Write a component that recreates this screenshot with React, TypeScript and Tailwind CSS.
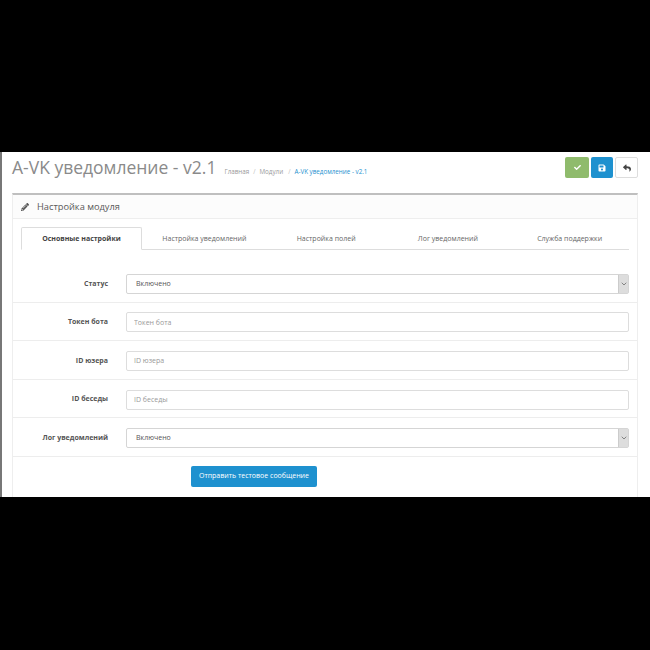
import { ChevronDown } from "lucide-react";
import { FaCheck, FaSave, FaReply, FaPencilAlt } from "react-icons/fa";

const tabs = ["Настройка уведомлений", "Настройка полей", "Лог уведомлений", "Служба поддержки"];

function Row({ label, children }: { label: string; children: React.ReactNode }) {
  return (
    <div className="flex h-[38.6px] items-center border-b border-[#ededed] pt-[2px]">
      <div className="w-[95px] shrink-0 text-right text-[7px] font-bold text-[#555]">{label}</div>
      <div className="ml-[18px] mr-[8px] flex-1">{children}</div>
    </div>
  );
}

function Sel() {
  return (
    <div className="flex h-[20px] items-center justify-between rounded-[2px] border border-[#d5d5d5] bg-white text-[7px] text-[#555]">
      <span className="pl-[9px]">Включено</span>
      <span className="flex h-full w-[10px] items-center justify-center border-l border-[#ccc] bg-[#ddd]">
        <ChevronDown size={8} strokeWidth={2} className="text-[#555]" />
      </span>
    </div>
  );
}

function Inp({ ph }: { ph: string }) {
  return (
    <input
      placeholder={ph}
      className="block h-[20px] w-full rounded-[2px] border border-[#ddd] bg-white px-[7px] text-[7px] text-[#555] outline-none placeholder:text-[#999]"
    />
  );
}

export default function App() {
  return (
    <div className="h-[650px] w-[650px] overflow-hidden bg-black pt-[152px] font-['Open_Sans',sans-serif]">
      <div className="h-[345px] overflow-hidden border-l-2 border-[#777] bg-white">
        <div className="ml-[10px] mr-[12px] flex h-[41px] items-start justify-between">
          <div className="flex items-baseline pt-[2px]">
            <h1 className="text-[17.5px] leading-[26px] text-[#8a8a8a]">A-VK уведомление - v2.1</h1>
            <div className="ml-[8px] flex gap-[4px] text-[6.25px] text-[#999]">
              <span>Главная</span>
              <span className="text-[#bbb]">/</span>
              <span>Модули</span>
              <span className="ml-[1px] text-[#bbb]">/</span>
              <span className="text-[#1e91cf]">A-VK уведомление - v2.1</span>
            </div>
          </div>
          <div className="mt-[5px] flex gap-[2px]">
            <button className="flex h-[21px] w-[24px] items-center justify-center rounded-[2px] bg-[#8fbb6c] text-white">
              <FaCheck size={7} />
            </button>
            <button className="flex h-[21px] w-[22px] items-center justify-center rounded-[2px] bg-[#1e91cf] text-white">
              <FaSave size={8} />
            </button>
            <button className="flex h-[21px] w-[23px] items-center justify-center rounded-[2px] border border-[#ddd] bg-white text-[#444]">
              <FaReply size={8} />
            </button>
          </div>
        </div>
        <div className="ml-[10px] mr-[12px] h-[320px] border-x border-t-2 border-x-[#eee] border-t-[#bfbfbf]">
          <div className="flex h-[24px] items-center gap-[8px] border-b border-[#eee] bg-[#fcfcfc] pl-[8px] text-[9.25px] text-[#595959]">
            <FaPencilAlt size={8} className="text-[#555]" />
            <span>Настройка модуля</span>
          </div>
          <div className="ml-[8px] mr-[8px] mt-[8px] flex h-[23px] border-b border-[#ddd] text-[7px] text-[#666]">
            <div className="flex h-[23px] w-[121px] items-center justify-center rounded-t-[2px] border border-[#ddd] border-b-white bg-white pt-[2px] font-bold text-[#444]">
              Основные настройки
            </div>
            {tabs.map((t) => (
              <div key={t} className="flex flex-1 items-center justify-center pl-[3px] pt-[2px]">{t}</div>
            ))}
          </div>
          <div className="mt-[14px]">
            <Row label="Статус"><Sel /></Row>
            <Row label="Токен бота"><Inp ph="Токен бота" /></Row>
            <Row label="ID юзера"><Inp ph="ID юзера" /></Row>
            <Row label="ID беседы"><Inp ph="ID беседы" /></Row>
            <Row label="Лог уведомлений"><Sel /></Row>
          </div>
          <div className="ml-[178px] mt-[9px]">
            <button className="block h-[21px] w-[126px] rounded-[2px] bg-[#1e91cf] text-[7px] text-white">
              Отправить тестовое сообщение
            </button>
          </div>
        </div>
      </div>
    </div>
  );
}
